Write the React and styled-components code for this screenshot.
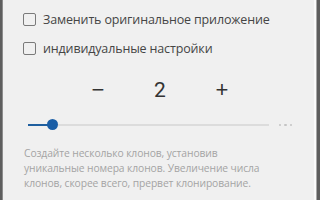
import React from "react";
import styled, { createGlobalStyle } from "styled-components";

const Global = createGlobalStyle`
  html, body { margin: 0; padding: 0; }
  body { width: 320px; height: 200px; overflow: hidden; background: #6a6a6a; }
`;

const Frame = styled.div`
  width: 320px;
  height: 200px;
  box-sizing: border-box;
  background: #5e5e5e;
  padding: 0 4px 0 2px;
  display: flex;
`;

const Panel = styled.div`
  flex: 1;
  box-sizing: border-box;
  background: #f0f0f0;
  border-left: 1px solid #8c8c8c;
  border-right: 2px solid #fbfbfb;
  box-shadow: 1px 0 0 #a8a8a8;
  padding: 12px 0 0 20px;
  font-family: "Open Sans", "Liberation Sans", sans-serif;
  display: flex;
  flex-direction: column;
`;

const CheckRow = styled.label`
  display: flex;
  align-items: center;
  height: 14px;
  gap: 7px;
  margin-bottom: ${(p) => p.$mb || 0}px;
  color: #454545;
  font-size: 12.5px;
  letter-spacing: -0.15px;
`;

const Box = styled.span`
  width: 11px;
  height: 11px;
  border: 1.5px solid #7a7a7a;
  border-radius: 2px;
  flex: none;
`;

const Stepper = styled.div`
  display: flex;
  align-items: center;
  justify-content: center;
  height: 24px;
  margin-top: 23px;
  margin-right: 17px;
  color: #333;
`;

const StepBtn = styled.span`
  width: 62px;
  text-align: center;
  font-size: 22px;
  font-weight: 400;
  line-height: 24px;
  font-family: "Liberation Sans", sans-serif;
`;

const Value = styled.span`
  width: 62px;
  text-align: center;
  font-size: 21px;
  line-height: 24px;
  font-family: "Roboto", sans-serif;
`;

const SliderRow = styled.div`
  display: flex;
  align-items: center;
  margin-top: 17px;
  height: 12px;
  padding-left: 5px;
  padding-right: 22px;
`;

const Track = styled.div`
  position: relative;
  flex: 1;
  height: 2px;
  background: #dcdcdc;
`;

const Active = styled.div`
  position: absolute;
  left: 0;
  top: 0;
  height: 2px;
  background: #1f5f9f;
`;

const Thumb = styled.div`
  position: absolute;
  top: -5px;
  width: 11px;
  height: 11px;
  margin-left: -5px;
  border-radius: 50%;
  background: #1a5ea6;
`;

const Dots = styled.div`
  display: flex;
  gap: 3px;
  margin-left: 10px;
  span {
    width: 2.5px;
    height: 2.5px;
    border-radius: 50%;
    background: #c4c4c4;
  }
`;

const Hint = styled.p`
  margin: 15px 0 0 1px;
  width: 275px;
  font-size: 10.3px;
  line-height: 15px;
  color: #a4a4a4;
  letter-spacing: -0.1px;
`;

export default function App() {
  return (
    <>
      <Global />
      <Frame>
        <Panel>
          <CheckRow $mb={15}>
            <Box />
            Заменить оригинальное приложение
          </CheckRow>
          <CheckRow>
            <Box />
            индивидуальные настройки
          </CheckRow>
          <Stepper>
            <StepBtn>−</StepBtn>
            <Value>2</Value>
            <StepBtn>+</StepBtn>
          </Stepper>
          <SliderRow>
            <Track>
              <Active style={{ width: "24px" }} />
              <Thumb style={{ left: "24px" }} />
            </Track>
            <Dots>
              <span />
              <span />
              <span />
            </Dots>
          </SliderRow>
          <Hint>
            Создайте несколько клонов, установив
            <br />
            уникальные номера клонов. Увеличение числа
            <br />
            клонов, скорее всего, прервет клонирование.
          </Hint>
        </Panel>
      </Frame>
    </>
  );
}
